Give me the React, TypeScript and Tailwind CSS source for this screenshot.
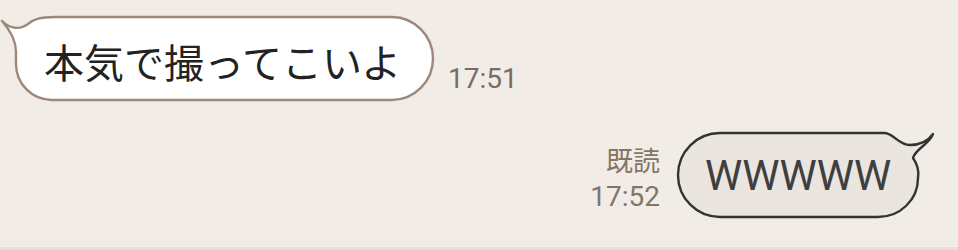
import React from 'react';

const jp = "font-['Noto_Sans_CJK_JP','Noto_Sans',sans-serif]";
const roboto = "font-['Roboto','Noto_Sans_CJK_JP',sans-serif]";

function IncomingBubble({ text }: { text: string }) {
    return (
        <div className="relative w-[440px] h-[93px] shrink-0">
            <svg className="absolute inset-0" width="440" height="93" viewBox="0 12 440 93">
                <path
                    d="M 55 17 L 392 17 A 41.5 41.5 0 0 1 433 58.5 A 41.5 41.5 0 0 1 392 100 L 52 100 A 36 36 0 0 1 16 64 L 16 52 C 16 40 10 30 2 21 C 10 29 20 30 28 24 C 34 19 40 17 55 17 Z"
                    fill="#ffffff"
                    stroke="#9d887b"
                    strokeWidth="2.4"
                    strokeLinejoin="round"
                />
            </svg>
            <div className={`relative pt-[29px] pl-[44px] text-[40px] leading-[40px] text-[#222222] whitespace-nowrap ${jp}`}>
                {text}
            </div>
        </div>
    );
}

function OutgoingBubble({ text }: { text: string }) {
    return (
        <div className="relative w-[270px] h-[96px] shrink-0">
            <svg className="absolute inset-0" width="270" height="96" viewBox="670 126 270 96">
                <path
                    d="M 720 133 L 884 133 C 894 133 898 145 910 145 C 920 145 928 141 933 134 C 930 144 916 148 913 158 C 918 165 919 172 918 178 C 918 200 900 217 878 217 L 720 217 A 42 42 0 0 1 720 133 Z"
                    fill="#ebe5df"
                    stroke="#333333"
                    strokeWidth="2.4"
                    strokeLinejoin="round"
                />
            </svg>
            <div className={`relative pt-[29px] pl-[35px] text-[42px] leading-[42px] text-[#3f3f3f] whitespace-nowrap ${roboto}`}>
                {text}
            </div>
        </div>
    );
}

export default function App() {
    return (
        <div className="w-[958px] h-[250px] bg-[#f1ece6] flex flex-col overflow-hidden">
            <div className="flex-1 flex flex-col pt-[12px]">
                <div className="flex items-end">
                    <IncomingBubble text="本気で撮ってこいよ" />
                    <span className={`ml-[8px] mb-[12px] text-[28px] leading-none text-[#7b6b5f] ${roboto}`}>
                        17:51
                    </span>
                </div>

                <div className="flex justify-end items-start mt-[21px] pr-[18px]">
                    <div className="flex flex-col items-end mt-[20px] mr-[10px] text-[#857567]">
                        <span className={`text-[27px] leading-[28px] ${jp}`}>既読</span>
                        <span className={`mt-[9px] text-[28px] leading-[28px] ${roboto}`}>17:52</span>
                    </div>
                    <OutgoingBubble text="WWWWW" />
                </div>
            </div>
            <div className="h-px bg-[#f5f0eb]" />
            <div className="h-[3px] bg-[#e6ddd4]" />
        </div>
    );
}
